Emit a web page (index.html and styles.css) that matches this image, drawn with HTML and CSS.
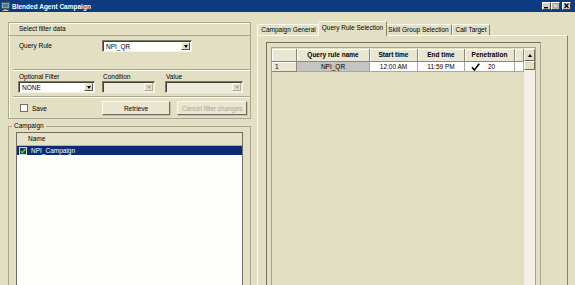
FILE: index.html
```html
<!DOCTYPE html>
<html lang="en">
<head>
  <meta charset="UTF-8">
  <title>Blended Agent Campaign</title>
  <link rel="stylesheet" href="styles.css">
</head>
<body>

<div class="window">
  <div class="titlebar">
    <svg class="app-icon" viewBox="0 0 9 9" width="9" height="9">
      <rect x="0.5" y="0.5" width="8" height="6" fill="#c9c6bb" stroke="#55534c"/>
      <rect x="1.5" y="1.5" width="6" height="4" fill="#3f7f8f"/>
      <rect x="3" y="7" width="3" height="1" fill="#8c8a80"/>
      <rect x="1.5" y="8" width="6" height="1" fill="#c9c6bb"/>
    </svg>
    <span class="title">Blended Agent Campaign</span>
    <div class="caption-btns">
      <span class="cap-btn">
        <svg viewBox="0 0 7 6" width="7" height="6"><rect x="1" y="4" width="4" height="1.4" fill="#000"/></svg>
      </span>
      <span class="cap-btn">
        <svg viewBox="0 0 7 6" width="7" height="6"><rect x="1" y="0.5" width="5" height="4.5" fill="none" stroke="#9a978c"/></svg>
      </span>
      <span class="cap-btn close">
        <svg viewBox="0 0 7 6" width="7" height="6"><path d="M1.5 0.5 L5.5 5 M5.5 0.5 L1.5 5" stroke="#000" stroke-width="1.2"/></svg>
      </span>
    </div>
  </div>

  <div class="client">
    <div class="left">
      <div class="filter-box">
        <div class="filter-head">Select filter data</div>

        <div class="row-query">
          <span class="lbl-query">Query Rule</span>
          <div class="combo combo-query">
            <span class="combo-text">NPI_QR</span>
            <span class="drop"><i class="tri"></i></span>
          </div>
        </div>
        <div class="sep"></div>

        <div class="filter-opts">
          <span class="lbl">Optional Filter</span>
          <span class="lbl">Condition</span>
          <span class="lbl">Value</span>
          <div class="combo combo-none">
            <span class="combo-text">NONE</span>
            <span class="drop"><i class="tri"></i></span>
          </div>
          <div class="combo combo-cond disabled">
            <span class="combo-text"></span>
            <span class="drop"><i class="tri"></i></span>
          </div>
          <div class="combo combo-value disabled">
            <span class="combo-text"></span>
            <span class="drop"><i class="tri"></i></span>
          </div>
        </div>
        <div class="sep"></div>

        <div class="filter-actions">
          <label class="check"><span class="box"></span>Save</label>
          <button type="button" class="btn btn-retrieve">Retrieve</button>
          <button type="button" class="btn btn-cancel" disabled>Cancel filter changes</button>
        </div>
      </div>

      <fieldset class="campaign">
        <legend>Campaign</legend>
        <div class="list">
          <div class="list-head">Name</div>
          <div class="list-row selected">
            <svg class="row-check" viewBox="0 0 8 8" width="8" height="8">
              <rect x="0.5" y="0.5" width="7" height="7" fill="#1b3a5e" stroke="#d8d6cc"/>
              <path d="M1.8 4.2 L3.3 5.8 L6.3 2" stroke="#44dd44" stroke-width="1.3" fill="none"/>
            </svg>
            <span>NPI_Campaign</span>
          </div>
        </div>
      </fieldset>
    </div>

    <div class="right">
      <div class="tabstrip">
        <div class="tab tab-general">Campaign General</div>
        <div class="tab tab-query active">Query Rule Selection</div>
        <div class="tab tab-skill">Skill Group Selection</div>
        <div class="tab tab-call">Call Target</div>
      </div>
      <div class="tabpage">
        <div class="panel">
          <div class="grid">
            <div class="grid-main">
              <div class="grid-row grid-head">
                <div class="hcell"></div>
                <div class="hcell">Query rule name</div>
                <div class="hcell">Start time</div>
                <div class="hcell">End time</div>
                <div class="hcell">Penetration</div>
                <div class="hcell"></div>
              </div>
              <div class="grid-row grid-data">
                <div class="hcell rowhead">1</div>
                <div class="cell cell-current">NPI_QR</div>
                <div class="cell">12:00 AM</div>
                <div class="cell">11:59 PM</div>
                <div class="cell cell-pen">
                  <svg viewBox="0 0 9 8" width="9" height="8"><path d="M1 4.3 L3.4 7 L8.2 0.8" stroke="#000" stroke-width="1.6" fill="none"/></svg>
                  <span>20</span>
                </div>
                <div class="cell"></div>
              </div>
            </div>
            <div class="vscroll">
              <span class="sb-btn"><i class="tri-up"></i></span>
              <span class="sb-thumb"></span>
            </div>
          </div>
        </div>
      </div>
    </div>
  </div>
</div>

</body>
</html>
```

FILE: styles.css
```css
* {
  box-sizing: border-box;
}
body {
  margin: 0;
  background: #e3dfc3;
}
.window {
  width: 575px;
  height: 285px;
  overflow: hidden;
  background: #e3dfc3;
  font-family: "Liberation Sans", Arial, sans-serif;
  font-size: 6.5px;
  color: #000;
}

/* title bar */
.titlebar {
  height: 12px;
  background: #0b3b80;
  display: flex;
  align-items: center;
  padding: 0 4px 0 1px;
}
.app-icon {
  margin-right: 2px;
}
.title {
  flex: 1;
  color: #fff;
  font-weight: bold;
}
.caption-btns {
  display: flex;
}
.cap-btn {
  width: 9px;
  height: 8px;
  background: #d4d0c8;
  border: 1px solid;
  border-color: #fff #404040 #404040 #fff;
  display: flex;
  align-items: center;
  justify-content: center;
}
.cap-btn.close {
  margin-left: 2px;
}

.client {
  display: flex;
  height: 285px;
  padding-left: 8px;
}

/* left column */
.left {
  width: 243px;
  margin-top: 10px;
  display: flex;
  flex-direction: column;
}
.filter-box {
  height: 97px;
  border: 1px solid #a9a693;
  box-shadow: inset 1px 1px 0 #fbfaf3;
}
.filter-head {
  height: 13px;
  line-height: 12px;
  padding-left: 10px;
  border-bottom: 1px solid #a9a693;
}
.row-query {
  height: 33px;
  display: flex;
  align-items: flex-start;
  padding: 4px 0 0 10px;
}
.lbl-query {
  width: 83px;
  line-height: 12px;
}
.sep {
  height: 2px;
  margin-left: 4px;
  border-top: 1px solid #a9a693;
  border-bottom: 1px solid #fbfaf3;
}
.filter-opts {
  height: 25px;
  display: grid;
  grid-template-columns: 84px 63px 78px;
  grid-template-rows: 9px 12px;
  padding: 1px 0 0 9px;
}
.lbl {
  line-height: 9px;
  padding-left: 1px;
}
.filter-actions {
  height: 20px;
  display: flex;
  align-items: flex-start;
  padding: 3px 0 0 11px;
}
.check {
  width: 82px;
  display: flex;
  align-items: center;
  height: 14px;
}
.check .box {
  width: 8px;
  height: 8px;
  margin-right: 4px;
  background: #fff;
  border: 1px solid #6f6d62;
}

/* combo boxes */
.combo {
  height: 12px;
  display: flex;
  align-items: stretch;
  background: #fff;
  border: 1px solid;
  border-color: #7b7969 #f4f3ea #f4f3ea #7b7969;
  box-shadow: inset 1px 1px 0 #3f3e38;
  padding: 1px;
}
.combo-query {
  width: 90px;
}
.combo-none {
  width: 77px;
}
.combo-cond {
  width: 53px;
}
.combo-value {
  width: 78px;
}
.combo-text {
  flex: 1;
  padding-left: 2px;
  line-height: 9px;
}
.combo.disabled {
  background: #eeebdc;
}
.drop {
  width: 9px;
  background: #e3dfc3;
  border: 1px solid;
  border-color: #fbfaf3 #55534b #55534b #fbfaf3;
  display: flex;
  align-items: center;
  justify-content: center;
}
.tri {
  width: 0;
  height: 0;
  border-left: 2.5px solid transparent;
  border-right: 2.5px solid transparent;
  border-top: 3px solid #000;
}
.combo.disabled .drop {
  border-color: #fbfaf3 #b0ad9c #b0ad9c #fbfaf3;
}
.combo.disabled .tri {
  border-top-color: #aaa796;
}

/* buttons */
.btn {
  height: 14px;
  padding: 0;
  font-family: inherit;
  font-size: 6.5px;
  color: #000;
  background: #e8e5d0;
  border: 1px solid;
  border-color: #fbfaf3 #6e6c60 #6e6c60 #fbfaf3;
  box-shadow: 1px 1px 0 #c3c0aa;
}
.btn-retrieve {
  width: 68px;
  margin-right: 7px;
}
.btn-cancel {
  width: 70px;
  color: #aaa795;
}

/* campaign list */
.campaign {
  margin: 3px 0 0;
  padding: 2px 7px 0;
  min-width: 0;
  height: 200px;
  border: 1px solid #a9a693;
}
.campaign legend {
  margin-left: -4px;
  padding: 0 2px;
  line-height: 8px;
}
.list {
  height: 170px;
  background: #fdfdfc;
  border: 1px solid #6f6d62;
}
.list-head {
  height: 13px;
  line-height: 12px;
  padding-left: 11px;
  background: #e6e2c9;
  border-bottom: 1px solid #b5b29f;
}
.list-row {
  height: 9px;
  display: flex;
  align-items: center;
  padding-left: 2px;
}
.list-row.selected {
  background: #0c2b72;
  color: #fff;
}
.row-check {
  margin-right: 4px;
}

/* right column, tabs */
.right {
  width: 311px;
  margin: 9px 0 0 6px;
  display: flex;
  flex-direction: column;
}
.tabstrip {
  height: 14px;
  display: flex;
  align-items: flex-end;
}
.tab {
  height: 11px;
  line-height: 9px;
  text-align: center;
  white-space: nowrap;
  border: 1px solid;
  border-bottom: none;
  border-color: #fbfaf3 #858270 transparent #fbfaf3;
  border-radius: 2px 2px 0 0;
}
.tab-general {
  width: 63px;
}
.tab-query {
  width: 69px;
}
.tab-skill {
  width: 67px;
}
.tab-call {
  width: 38px;
}
.tab.active {
  height: 15px;
  line-height: 11px;
  margin: 0 -2px -1px;
  background: #e3dfc3;
  z-index: 1;
}
.tabpage {
  flex: 1;
  padding: 6px 0 0 8px;
  border-top: 1px solid #fbfaf3;
  border-left: 1px solid #fbfaf3;
  border-right: 1px solid #858270;
}
.panel {
  width: 275px;
  height: 260px;
  padding: 4px 4px 0;
  border-top: 1px solid #716f63;
  border-left: 1px solid #716f63;
  border-right: 1px solid #a9a693;
}

/* grid */
.grid {
  height: 250px;
  display: flex;
  border: 1px solid #a5a292;
}
.grid-main {
  flex: 1;
  padding-top: 1px;
}
.grid-row {
  display: grid;
  grid-template-columns: 25px 73px 48px 47px 50px 1fr;
}
.grid-head {
  height: 13px;
}
.grid-data {
  height: 10px;
}
.hcell {
  background: #e9e6d3;
  border-right: 1px solid #8a8776;
  border-bottom: 1px solid #8a8776;
  box-shadow: inset 1px 1px 0 #fff;
  font-weight: bold;
  text-align: center;
  line-height: 12px;
  white-space: nowrap;
}
.hcell.rowhead {
  font-weight: normal;
  text-align: left;
  padding-left: 3px;
  line-height: 9px;
}
.cell {
  background: #fff;
  border-right: 1px solid #a8a8a8;
  border-bottom: 1px solid #a8a8a8;
  text-align: center;
  line-height: 9px;
  white-space: nowrap;
}
.cell-current {
  background: #c4c4c2;
}
.cell-pen {
  display: flex;
  align-items: center;
  padding-left: 6px;
  gap: 8px;
}
.vscroll {
  width: 11px;
  padding-top: 1px;
  display: flex;
  flex-direction: column;
  background: #f2f0e6;
}
.sb-btn,
.sb-thumb {
  display: flex;
  align-items: center;
  justify-content: center;
  background: #e3dfc3;
  border: 1px solid;
  border-color: #fbfaf3 #6e6c60 #6e6c60 #fbfaf3;
}
.sb-btn {
  height: 12px;
}
.sb-thumb {
  height: 9px;
}
.tri-up {
  width: 0;
  height: 0;
  border-left: 2.5px solid transparent;
  border-right: 2.5px solid transparent;
  border-bottom: 3px solid #000;
}
```
